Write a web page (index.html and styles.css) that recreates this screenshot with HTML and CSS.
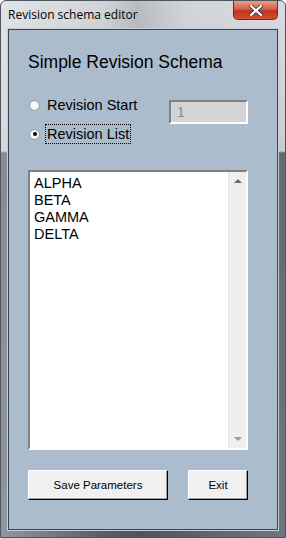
FILE: index.html
```html
<!DOCTYPE html>
<html lang="en">
<head>
  <meta charset="UTF-8">
  <title>Revision schema editor</title>
  <link rel="stylesheet" href="styles.css">
</head>
<body>
  <div class="window">
    <!-- Title bar -->
    <div class="titlebar">
      <span class="title">Revision schema editor</span>
      <div class="close-btn">
        <svg width="14" height="11" viewBox="0 0 14 11">
          <path d="M2 1 L12 10 M12 1 L2 10" stroke="#39404a" stroke-width="4" stroke-linecap="round"/>
          <path d="M2 1 L12 10 M12 1 L2 10" stroke="#fff" stroke-width="2.2" stroke-linecap="round"/>
        </svg>
      </div>
    </div>

    <div class="client">
      <h1>Simple Revision Schema</h1>

      <div class="options">
        <div class="radios">
          <label class="radio-row">
            <span class="radio"></span>
            <span class="radio-text">Revision Start</span>
          </label>
          <label class="radio-row">
            <span class="radio checked"></span>
            <span class="radio-text focus">Revision List</span>
          </label>
        </div>
        <div class="textbox">1</div>
      </div>

      <div class="listbox">
        <div class="items">
          <div>ALPHA</div>
          <div>BETA</div>
          <div>GAMMA</div>
          <div>DELTA</div>
        </div>
        <div class="scrollbar">
          <span class="arrow up"></span>
          <span class="arrow down"></span>
        </div>
      </div>

      <div class="buttons">
        <button class="btn save">Save Parameters</button>
        <button class="btn exit">Exit</button>
      </div>
    </div>
  </div>
</body>
</html>
```

FILE: styles.css
```css
/* Window frame */
body {
  margin: 0;
  font-family: 'Liberation Sans', Arial, sans-serif;
}
.window {
  width: 286px;
  height: 538px;
  box-sizing: border-box;
  display: flex;
  flex-direction: column;
  border: 1px solid #4e5660;
  border-radius: 6px 6px 0 0;
  background:
    linear-gradient(90deg, rgba(255,255,255,0.35) 0%, rgba(255,255,255,0) 35%, rgba(0,0,0,0.12) 48%, rgba(255,255,255,0) 65%, rgba(255,255,255,0.15) 100%),
    linear-gradient(180deg, #d2d6da 0%, #bfc4c9 150px, #48525c 152px, #55606b 100%);
}
.titlebar {
  height: 28px;
  display: flex;
  justify-content: space-between;
  align-items: flex-start;
}
.title {
  font-family: 'Open Sans', 'Noto Sans', sans-serif;
  font-size: 12px;
  color: #000;
  margin: 5px 0 0 7px;
}
.close-btn {
  width: 45px;
  height: 19px;
  margin-right: 7px;
  box-sizing: border-box;
  border: 1px solid #6b2a20;
  border-top: none;
  border-radius: 0 0 5px 5px;
  background: linear-gradient(180deg, #e8a08c 0%, #d2604a 45%, #c0341e 55%, #d4502e 100%);
  display: flex;
  align-items: center;
  justify-content: center;
}
.client {
  flex: 1;
  margin: 0 7px 7px 7px;
  border: 1px solid #3d4650;
  box-shadow: 0 0 0 1px #c8ced4;
  background: #abbccc;
  padding: 0 29px 0 19px;
  display: flex;
  flex-direction: column;
}
h1 {
  font-size: 17.5px;
  font-weight: normal;
  margin: 22px 0 0 0;
  color: #000;
  line-height: 20px;
}
.options {
  display: flex;
  justify-content: space-between;
  margin-top: 24px;
}
.radios {
  display: flex;
  flex-direction: column;
  gap: 11px;
}
.radio-row {
  display: flex;
  align-items: center;
  font-size: 14.5px;
  height: 18px;
}
.radio {
  width: 11px;
  height: 11px;
  border-radius: 50%;
  box-sizing: border-box;
  border: 1px solid #9a9a9a;
  background: radial-gradient(circle, #ffffff 0%, #e6e6e6 100%);
  margin: 0 5px 0 1px;
  position: relative;
}
.radio.checked::after {
  content: '';
  position: absolute;
  left: 2.5px;
  top: 2.5px;
  width: 4px;
  height: 4px;
  border-radius: 50%;
  background: #000;
}
.radio-text {
  padding: 1px 1px;
  border: 1px dotted transparent;
}
.radio-text.focus {
  border-color: #000;
}
.textbox {
  width: 79px;
  height: 24px;
  box-sizing: border-box;
  margin-top: 4px;
  background: #d4d4d4;
  border-top: 2px solid #808080;
  border-left: 2px solid #808080;
  border-right: 2px solid #ffffff;
  border-bottom: 2px solid #ffffff;
  color: #8a8a8a;
  font-size: 14px;
  padding: 2px 0 0 6px;
}
.listbox {
  margin-top: 27px;
  height: 280px;
  width: 220px;
  box-sizing: border-box;
  background: #fff;
  border-top: 2px solid #808080;
  border-left: 2px solid #808080;
  border-right: 2px solid #ffffff;
  border-bottom: 2px solid #ffffff;
  display: flex;
}
.items {
  flex: 1;
  font-size: 14.5px;
  line-height: 17px;
  padding: 3px 0 0 4px;
}
.scrollbar {
  width: 17px;
  background: #efefef;
  border-left: 1px solid #e4e4e4;
  display: flex;
  flex-direction: column;
  justify-content: space-between;
  align-items: center;
  padding: 7px 0 7px 0;
}
.arrow {
  width: 0;
  height: 0;
  border-left: 4px solid transparent;
  border-right: 4px solid transparent;
}
.arrow.up {
  border-bottom: 4px solid #6a6a6a;
}
.arrow.down {
  border-top: 4px solid #9a9a9a;
}
.buttons {
  display: flex;
  justify-content: space-between;
  margin-top: 20px;
}
.btn {
  height: 30px;
  background: #f0f0f0;
  border-top: 1px solid #ffffff;
  border-left: 1px solid #ffffff;
  border-right: 1px solid #000;
  border-bottom: 1px solid #000;
  box-shadow: inset -1px -1px 0 #a0a0a0;
  font-family: 'Liberation Sans', Arial, sans-serif;
  font-size: 11.5px;
  color: #000;
  padding: 0;
}
.save {
  width: 140px;
}
.exit {
  width: 60px;
}
```
